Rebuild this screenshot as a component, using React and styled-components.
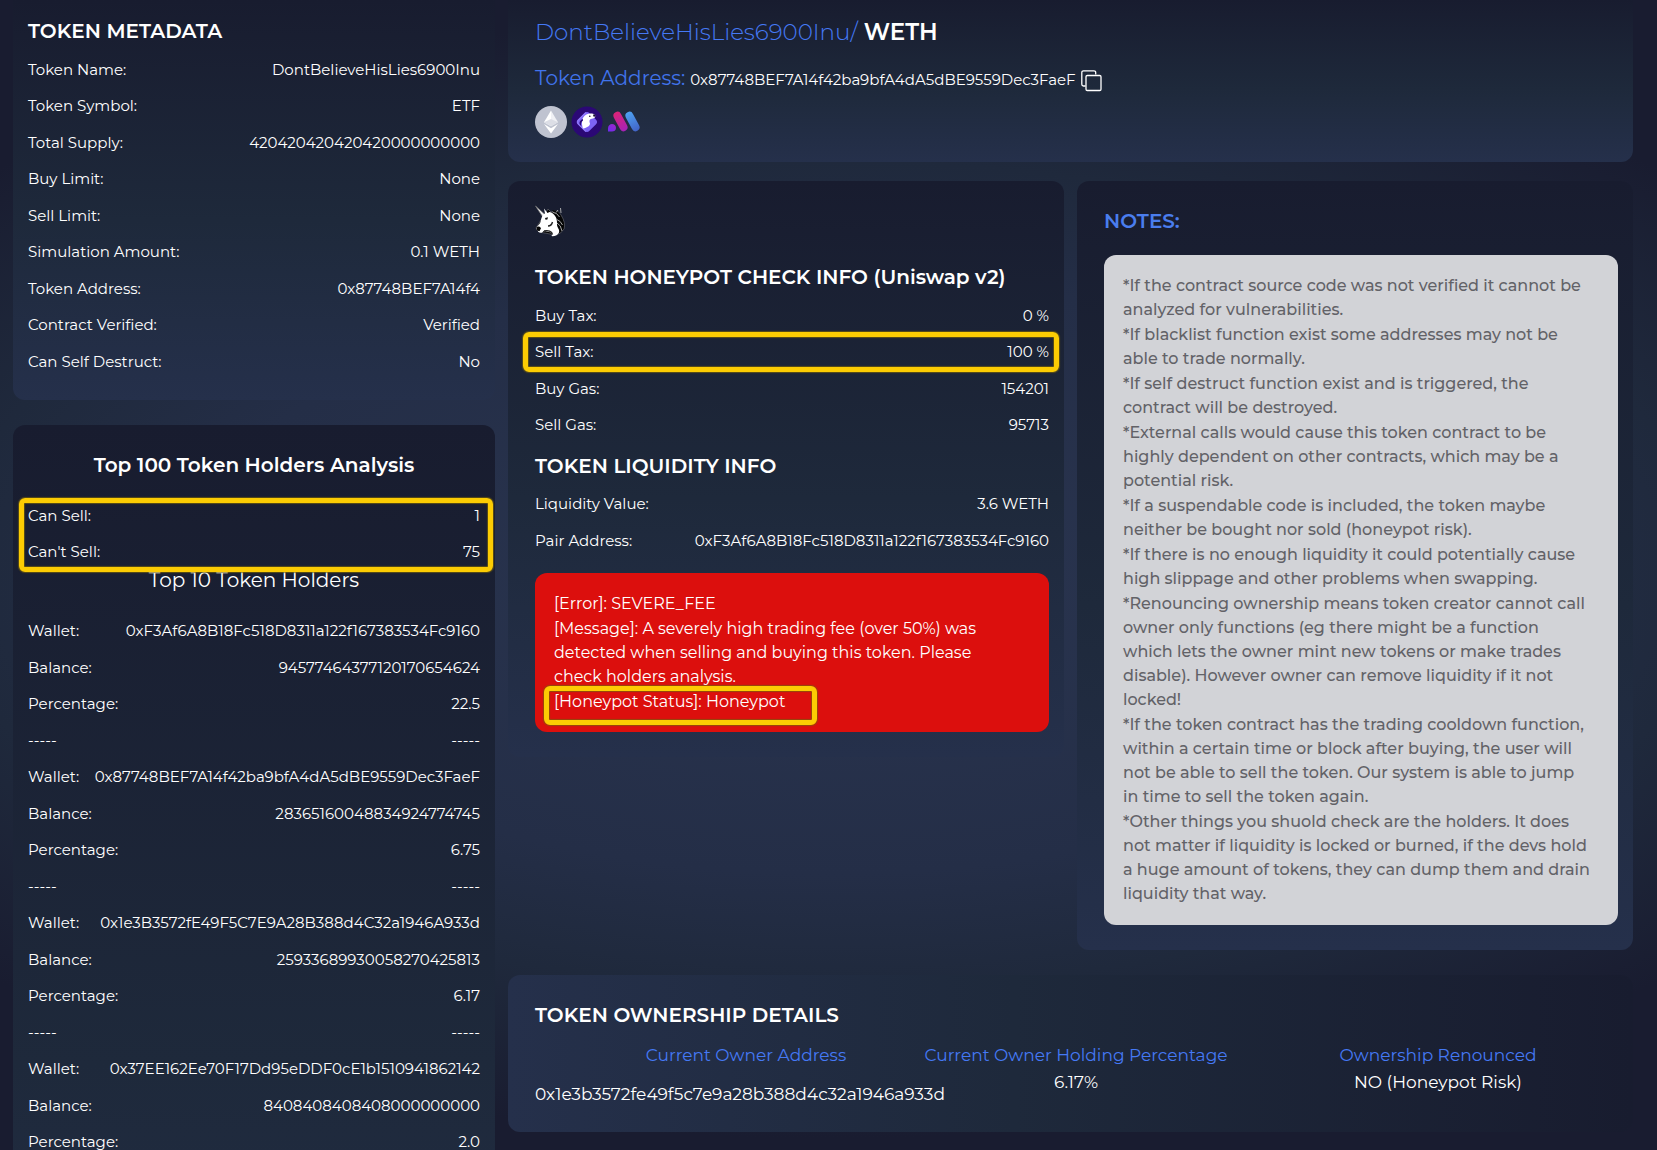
import React from "react";
import styled, { createGlobalStyle } from "styled-components";

const font = `Montserrat, Inter, "Open Sans", "Liberation Sans", sans-serif`;

const GlobalStyle = createGlobalStyle`
  * { box-sizing: border-box; }
  html, body { margin: 0; }
  html { background: #191c30; }
  body {
    font-family: ${font};
    font-size: 16px;
    line-height: 24px;
    color: #ffffff;
    overflow: hidden;
  }
  h1, h2, p, dl, dt, dd { margin: 0; }
`;

const Page = styled.main`
  display: grid;
  grid-template-columns: 482fr 1125fr;
  column-gap: 13px;
  height: 100vh;
  padding: 0 24px 0 13px;
  overflow: hidden;
  background: radial-gradient(74% 50% at 50% 50%, #2a3550 0%, #242e47 52%, #1f293c 72%, #191c30 98%);
`;

const Column = styled.div`
  display: flex;
  flex-direction: column;
  gap: ${(p) => p.$gap}px;
  min-width: 0;
`;

const Card = styled.section`
  border-radius: 12px;
  background: linear-gradient(${(p) => p.$angle || "180deg"}, #181c2f 0%, #1e293b 55%, #25304b 100%);
`;

const MetaCard = styled(Card)`
  border-radius: 0 0 12px 12px;
  height: 400px;
  padding: 17px 15px 0;
`;

const HoldersCard = styled(Card)`
  height: 1160px;
  padding: 26px 15px 0;
`;

const HeaderCard = styled(Card)`
  border-radius: 0 0 12px 12px;
  height: 162px;
  padding: 16px 27px 0;
`;

const Panels = styled.div`
  display: grid;
  grid-template-columns: 1fr 1fr;
  column-gap: 13px;
  align-items: start;
  margin: 19px 0 25px;
`;

const CheckCard = styled(Card)`
  padding: 24px 15px 25px 27px;
`;

const NotesCard = styled(Card)`
  padding: 26px 15px 25px 27px;
`;

const OwnerCard = styled(Card)`
  height: 157px;
  padding: 26px 0 0 27px;
`;

const Heading = styled.h2`
  margin-top: ${(p) => p.$top || 0}px;
  font-size: 20px;
  line-height: 28px;
  font-weight: ${(p) => p.$weight || 600};
  color: ${(p) => p.$color || "#ffffff"};
  text-align: ${(p) => (p.$center ? "center" : "left")};
`;

const Row = styled.div`
  position: relative;
  display: flex;
  justify-content: space-between;
  height: 24px;
  white-space: nowrap;
  font-size: 15px;
`;

const Rows = styled.dl`
  position: relative;
  display: grid;
  gap: 12px;
  margin-top: ${(p) => p.$top}px;

  ${Row}:nth-of-type(${(p) => p.$tall || "even"}) {
    height: 25px;
  }
`;

const Marker = styled.span`
  position: absolute;
  inset: ${(p) => p.$inset};
  border: 5px solid #fccc03;
  border-radius: 6px;
  box-shadow: 0 0 1px 1px rgba(120, 98, 10, 0.7), inset 0 0 1px 1px rgba(120, 98, 10, 0.7);
  pointer-events: none;
`;

const Title = styled.h1`
  font-size: 23px;
  line-height: 32px;
  font-weight: 300;
  color: #4579f5;
  strong { font-weight: 600; color: #ffffff; }
`;

const AddressLine = styled.div`
  display: flex;
  align-items: baseline;
  gap: 5px;
  height: 32px;
  margin-top: 14px;
  font-size: 15px;
  white-space: nowrap;
`;

const AddressLabel = styled.span`
  font-size: 20px;
  line-height: 32px;
  color: #4174ec;
`;

const CopyButton = styled.button`
  display: flex;
  align-self: center;
  padding: 5px 0 0;
  border: 0;
  background: none;
  color: #ffffff;
  cursor: pointer;
`;

const Logos = styled.div`
  display: flex;
  gap: 4px;
  margin-top: 12px;
`;

const LogoLink = styled.a`
  display: flex;
`;

const Alert = styled.div`
  display: grid;
  gap: 1px;
  margin-top: 20px;
  padding: 19px 19px 18px;
  border-radius: 12px;
  background: #dc0f0d;
  white-space: pre-line;
`;

const Status = styled.p`
  position: relative;
  justify-self: start;
`;

const NotesBox = styled.div`
  display: grid;
  gap: 1px;
  margin-top: 20px;
  padding: 19px;
  border-radius: 12px;
  background: #d2d3d7;
  color: #626267;
  font-weight: 500;
  white-space: pre-line;
`;

const OwnerItem = styled.div`
  display: flex;
  flex-direction: column;
  align-items: center;
  gap: ${(p) => p.$gap}px;
  dt { color: #4579f5; }
`;

const OwnerValue = styled.dd`
  align-self: ${(p) => (p.$start ? "flex-start" : "center")};
`;

const Owner = styled.dl`
  display: grid;
  grid-template-columns: minmax(0, 422fr) minmax(0, 238fr) minmax(0, 48fr) minmax(0, 390fr);
  margin-top: 14px;
  font-size: 17px;
  white-space: nowrap;

  ${OwnerItem}:last-child {
    grid-column: 4;
  }
`;

const metadata = [
  ["Token Name:", "DontBelieveHisLies6900Inu"],
  ["Token Symbol:", "ETF"],
  ["Total Supply:", "420420420420420000000000"],
  ["Buy Limit:", "None"],
  ["Sell Limit:", "None"],
  ["Simulation Amount:", "0.1 WETH"],
  ["Token Address:", "0x87748BEF7A14f4"],
  ["Contract Verified:", "Verified"],
  ["Can Self Destruct:", "No"],
];

const holders = [
  ["Wallet:", "0xF3Af6A8B18Fc518D8311a122f167383534Fc9160"],
  ["Balance:", "94577464377120170654624"],
  ["Percentage:", "22.5"],
  ["-----", "-----"],
  ["Wallet:", "0x87748BEF7A14f42ba9bfA4dA5dBE9559Dec3FaeF"],
  ["Balance:", "28365160048834924774745"],
  ["Percentage:", "6.75"],
  ["-----", "-----"],
  ["Wallet:", "0x1e3B3572fE49F5C7E9A28B388d4C32a1946A933d"],
  ["Balance:", "25933689930058270425813"],
  ["Percentage:", "6.17"],
  ["-----", "-----"],
  ["Wallet:", "0x37EE162Ee70F17Dd95eDDF0cE1b1510941862142"],
  ["Balance:", "8408408408408000000000"],
  ["Percentage:", "2.0"],
];

const notes = [
  "*If the contract source code was not verified it cannot be\nanalyzed for vulnerabilities.",
  "*If blacklist function exist some addresses may not be\nable to trade normally.",
  "*If self destruct function exist and is triggered, the\ncontract will be destroyed.",
  "*External calls would cause this token contract to be\nhighly dependent on other contracts, which may be a\npotential risk.",
  "*If a suspendable code is included, the token maybe\nneither be bought nor sold (honeypot risk).",
  "*If there is no enough liquidity it could potentially cause\nhigh slippage and other problems when swapping.",
  "*Renouncing ownership means token creator cannot call\nowner only functions (eg there might be a function\nwhich lets the owner mint new tokens or make trades\ndisable). However owner can remove liquidity if it not\nlocked!",
  "*If the token contract has the trading cooldown function,\nwithin a certain time or block after buying, the user will\nnot be able to sell the token. Our system is able to jump\nin time to sell the token again.",
  "*Other things you shuold check are the holders. It does\nnot matter if liquidity is locked or burned, if the devs hold\na huge amount of tokens, they can dump them and drain\nliquidity that way.",
];

function DataRow({ label, value, children }) {
  return (
    <Row>
      <dt>{label}</dt>
      <dd>{value}</dd>
      {children}
    </Row>
  );
}

const DataRows = ({ items }) => items.map(([l, v], i) => <DataRow key={i} label={l} value={v} />);

const CopyIcon = () => (
  <svg width="21" height="22" viewBox="0 0 21 22" fill="none" stroke="currentColor" strokeWidth="1.3">
    <path d="M4.500 16H2.500A1.700 1.700 0 0 1 .8 14.300V2.500A1.700 1.700 0 0 1 2.500.8H13A1.700 1.700 0 0 1 14.700 2.500V4.500" />
    <rect x="5" y="5.500" width="15" height="15" rx="1.300" />
  </svg>
);

const EthereumIcon = () => (
  <svg width="32" height="32" viewBox="0 0 32 32">
    <circle cx="16" cy="16" r="16" fill="#bfc3d0" />
    <path d="M16 4.500 9 16.300l7 4z" fill="#ffffff" />
    <path d="m16 4.500 7 11.800-7 4z" fill="#f0f1f5" />
    <path d="m9 16.300 7-3.200 7 3.200-7 4z" fill="#dcdee6" />
    <path d="m9 18 7 4.200L23 18l-7 9.500z" fill="#ffffff" />
  </svg>
);

const BirdIcon = () => (
  <svg width="32" height="32" viewBox="0 0 32 32">
    <circle cx="16" cy="16" r="15.500" fill="#2b0875" />
    <rect x="8" y="8" width="16" height="16" rx="3.500" transform="rotate(45 16 16)" fill="#7d63f5" />
    <path d="m15 6.500-8 8q-1.200 1.500 0 3l8 8" fill="none" stroke="#8f78fa" strokeWidth="1.500" />
    <path d="M12 22.500c-1-3-1.800-7.500.2-11C14 8.300 17.500 7 21 7.500c2.800.4 4 2.400 2.900 3.900-.9 1.100-2.800.9-4.200 1.700-1.500.8-1.500 2.600-.8 4.200.8 2-2.900 4.700-6.900 5.200z" fill="#ffffff" />
    <path d="M12 14.500c-2 1.500-2.500 3.200-1.600 6L8.500 18c-.2-2.500 1-4 3.500-5z" fill="#2b0875" />
    <path d="M22.500 8.200c1.800.2 2.300 1.400 1.500 2.600l-2-.6z" fill="#1a1230" />
    <circle cx="18.800" cy="10.300" r=".8" fill="#1a1230" />
  </svg>
);

const BarsIcon = () => (
  <svg width="34" height="32" viewBox="0 0 34 32">
    <defs>
      <linearGradient id="dot" x1="0" y1="1" x2="1" y2="0"><stop stopColor="#6a2cf0" /><stop offset="1" stopColor="#a127c9" /></linearGradient>
      <linearGradient id="pink" x1="0" y1="0" x2="0" y2="1"><stop stopColor="#dd2377" /><stop offset="1" stopColor="#a622b8" /></linearGradient>
      <linearGradient id="blue" x1="0" y1="0" x2="0" y2="1"><stop stopColor="#4ea2f2" /><stop offset="1" stopColor="#4263c6" /></linearGradient>
    </defs>
    <path d="M1 25.500V22.500C1 19.500 3 18 5 18s4 1.500 4 4-2 3.500-4 3.500z" fill="url(#dot)" />
    <rect x="9.500" y="5" width="8" height="21" rx="4" transform="rotate(-28 13.500 15.500)" fill="url(#pink)" />
    <rect x="21.500" y="5" width="8" height="21" rx="4" transform="rotate(-28 25.500 15.500)" fill="url(#blue)" />
  </svg>
);

const UnicornIcon = () => (
  <svg width="31" height="32" viewBox="0 0 31 32">
    <path d="M13 4 16 7q7-3 10 3 5 8 3 14-3 5-8 6L4 27l-3-4z" fill="#050505" stroke="#6f7078" strokeWidth=".6" />
    <path d="m.5 1 9.500 8.500-2 2.800z" fill="#f1f1f1" stroke="#777777" strokeWidth=".7" />
    <path d="M9 3.500 12.500 8l2-1c5 1 8 6 7.500 12-.2 4 3 5 2 8.500-1 2.600-5 4.200-8 3.500 2-1 1.500-3-1-3.800-3-1-4.500-.4-6.500-1.200-1 2-3 2.300-5 1L1.500 24c0-3 3-4 4-7C6.500 13 7 10 10 8.500z" fill="#ffffff" />
    <path d="M1.500 22.500c1.500-1.500 3.500-1 4.500.8l-1.500 3-2.500-.8z" fill="#050505" />
    <path d="m10 13 3-.8-.6 2.300-1.900.2z" fill="#111111" />
    <path d="M17 5.500c5-1 8 3 9 6.500 3 4 3 9 2 13-1-5-3-8-7-11 1.500 0 2.300.3 3 .6-1.500-3-3.500-6-7-9.100z" fill="#050505" />
    <path d="M17.500 7q5 1 7 5M21 14q5 2 6.500 6M22 18q4 2 5 8M23 5l-2 2.500M26 8l-.5-5" fill="none" stroke="#b5b5b5" strokeWidth=".9" />
    <path d="M9 26c4-1 8 0 8.500 3.500M13 21c3 0 4-2 4.500-4" fill="none" stroke="#222222" strokeWidth="1.400" />
  </svg>
);

export default function App() {
  return (
    <>
      <GlobalStyle />
      <Page>
        <Column $gap={25}>
          <MetaCard>
            <Heading>TOKEN METADATA</Heading>
            <Rows $top={13}>
              <DataRows items={metadata} />
            </Rows>
          </MetaCard>
          <HoldersCard>
            <Heading $center>Top 100 Token Holders Analysis</Heading>
            <Rows $top={25}>
              <DataRow label="Can Sell:" value="1" />
              <DataRow label="Can't Sell:" value="75" />
              <Marker $inset="-6px -13px -7px -9px" />
            </Rows>
            <Heading $center $weight={400} $top={1}>Top 10 Token Holders</Heading>
            <Rows $top={25} $tall="odd">
              <DataRows items={holders} />
            </Rows>
          </HoldersCard>
        </Column>
        <Column $gap={0}>
          <HeaderCard>
            <Title>DontBelieveHisLies6900Inu/ <strong>WETH</strong></Title>
            <AddressLine>
              <AddressLabel>Token Address:</AddressLabel>
              <span>0x87748BEF7A14f42ba9bfA4dA5dBE9559Dec3FaeF</span>
              <CopyButton aria-label="Copy address"><CopyIcon /></CopyButton>
            </AddressLine>
            <Logos>
              <LogoLink href="#ethereum" aria-label="Ethereum"><EthereumIcon /></LogoLink>
              <LogoLink href="#dex" aria-label="Dex chart"><BirdIcon /></LogoLink>
              <LogoLink href="#chart" aria-label="Trading chart"><BarsIcon /></LogoLink>
            </Logos>
          </HeaderCard>
          <Panels>
            <CheckCard>
              <UnicornIcon />
              <Heading $top={19}>TOKEN HONEYPOT CHECK INFO (Uniswap v2)</Heading>
              <Rows $top={13}>
                <DataRow label="Buy Tax:" value="0 %" />
                <DataRow label="Sell Tax:" value="100 %">
                  <Marker $inset="-8px -10px -7px -12px" />
                </DataRow>
                <DataRow label="Buy Gas:" value="154201" />
                <DataRow label="Sell Gas:" value="95713" />
              </Rows>
              <Heading $top={14}>TOKEN LIQUIDITY INFO</Heading>
              <Rows $top={12} $tall="odd">
                <DataRow label="Liquidity Value:" value="3.6 WETH" />
                <DataRow label="Pair Address:" value="0xF3Af6A8B18Fc518D8311a122f167383534Fc9160" />
              </Rows>
              <Alert role="alert">
                <p>[Error]: SEVERE_FEE</p>
                <p>{"[Message]: A severely high trading fee (over 50%) was\ndetected when selling and buying this token. Please\ncheck holders analysis."}</p>
                <Status>
                  [Honeypot Status]: Honeypot
                  <Marker $inset="-4px -32px -11px -10px" />
                </Status>
              </Alert>
            </CheckCard>
            <NotesCard>
              <Heading $color="#4a7dee">NOTES:</Heading>
              <NotesBox>
                {notes.map((n) => <p key={n}>{n}</p>)}
              </NotesBox>
            </NotesCard>
          </Panels>
          <OwnerCard $angle="270deg">
            <Heading>TOKEN OWNERSHIP DETAILS</Heading>
            <Owner>
              <OwnerItem $gap={15}>
                <dt>Current Owner Address</dt>
                <OwnerValue $start>0x1e3b3572fe49f5c7e9a28b388d4c32a1946a933d</OwnerValue>
              </OwnerItem>
              <OwnerItem $gap={3}>
                <dt>Current Owner Holding Percentage</dt>
                <OwnerValue>6.17%</OwnerValue>
              </OwnerItem>
              <OwnerItem $gap={3}>
                <dt>Ownership Renounced</dt>
                <OwnerValue>NO (Honeypot Risk)</OwnerValue>
              </OwnerItem>
            </Owner>
          </OwnerCard>
        </Column>
      </Page>
    </>
  );
}
